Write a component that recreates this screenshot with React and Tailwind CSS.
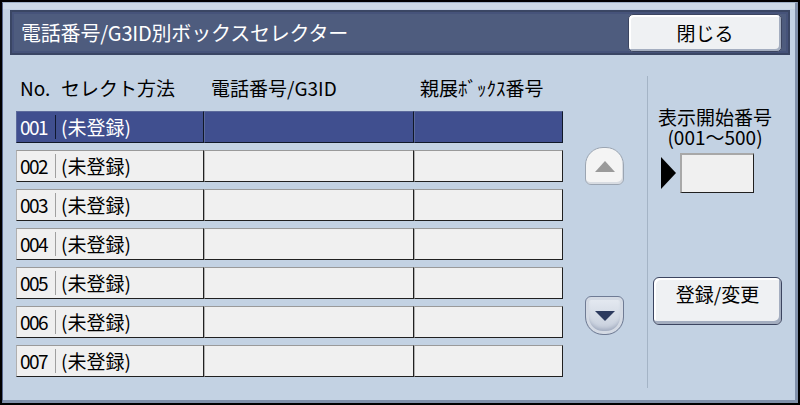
import React from 'react';

const rows = ['001', '002', '003', '004', '005', '006', '007'];

const Row = ({ no, selected }) => {
  const cell = selected
    ? 'bg-[#404f8f] border-t border-l border-t-[#5c6a9c] border-l-[#5c6a9c] border-r border-b border-r-[#101828] border-b-[#101828]'
    : 'bg-[#f0f0f0] border-t border-l border-t-[#9a9a9a] border-l-[#b0b0b0] border-r border-b border-r-[#202020] border-b-[#202020]';
  return (
    <div className="flex h-[32px]">
      <div className={`${cell} w-[188px] flex items-center pb-[2px] ${selected ? 'text-white' : 'text-black'}`}>
        <span className="w-[38px] pl-[3px] text-[19px] tracking-[-1.5px] leading-none">{no}</span>
        <span className={`w-px h-[24px] mt-[2px] ${selected ? 'bg-[#101830]' : 'bg-[#a0a0a0]'}`}></span>
        <span className="pl-[5px] text-[19px] leading-none">(未登録)</span>
      </div>
      <div className={`${cell} w-[210px]`}></div>
      <div className={`${cell} w-[149px]`}></div>
    </div>
  );
};

export default function App() {
  return (
    <div className="w-[800px] h-[405px] bg-black p-[2px] font-['Noto_Sans_CJK_JP',sans-serif]">
      <div className="w-full h-full flex flex-col bg-[#c3d2e3] border-t border-l border-t-[#9eb0c6] border-l-[#55658a] border-r-[3px] border-b-[3px] border-r-[#8090aa] border-b-[#8090aa] shadow-[inset_0_6px_0_#ccd9e6]">
        {/* title bar */}
        <div className="ml-[7px] mr-[5px] mt-[7px] h-[45px] flex items-center bg-[#4e5c7e] border-2 border-[#3a4664] shadow-[inset_0_0_0_2px_#46537a]">
          <span className="pl-[9px] text-white text-[20px] leading-none tracking-[-0.2px]">電話番号/G3ID別ボックスセレクター</span>
          <button className="ml-auto mr-[6px] w-[154px] h-[38px] rounded-[5px] bg-[#eff1f3] border border-[#3c4560] shadow-[inset_-2px_-2px_0_#a4aec0,inset_2px_2px_0_#ffffff] text-black text-[19px] leading-none flex items-center justify-center">
            閉じる
          </button>
        </div>

        {/* body */}
        <div className="flex pl-[13px]">
          <div className="w-[547px] flex flex-col">
            <div className="mt-[21px] h-[22px] flex items-center text-[19px] leading-none text-black">
              <span className="w-[45px] pl-[4px]">No.</span>
              <span className="w-[150px]">セレクト方法</span>
              <span className="w-[209px]">電話番号/G3ID</span>
              <span>親展ﾎﾞｯｸｽ番号</span>
            </div>
            <div className="mt-[13px] flex flex-col gap-[7px]">
              {rows.map((r, i) => (
                <Row key={r} no={r} selected={i === 0} />
              ))}
            </div>
          </div>

          {/* scroll buttons */}
          <div className="ml-[22px] w-[39px] flex flex-col">
            <div className="mt-[92px] h-[38px] rounded-t-[18px] rounded-b-[6px] bg-[#f4f4f4] border border-[#9ba5b2] shadow-[inset_-1px_-2px_0_#d8dce2] flex items-center justify-center">
              <svg width="20" height="11" viewBox="0 0 20 11">
                <polygon points="10,0 20,11 0,11" fill="#9a9a9a" />
              </svg>
            </div>
            <div className="mt-[111px] h-[39px] rounded-t-[6px] rounded-b-[18px] bg-gradient-to-b from-[#e6ebf2] to-[#c4ccda] border border-[#6f7b94] shadow-[inset_0_0_0_3px_#d4dae4,inset_0_-5px_4px_#9ea8bc] flex items-center justify-center">
              <svg width="20" height="10" viewBox="0 0 20 10">
                <polygon points="0,0 20,0 10,10" fill="#2c3a5e" />
              </svg>
            </div>
          </div>

          {/* divider */}
          <div className="ml-[23px] mt-[21px] w-px h-[312px] bg-[#a4b4c6]"></div>

          {/* right column */}
          <div className="w-[134px] flex flex-col">
            <div className="mt-[52px] text-center text-black text-[19px] leading-[20px]">
              <div>表示開始番号</div>
              <div>(001～500)</div>
            </div>
            <div className="mt-[6px] ml-[13px] flex items-center gap-[4px]">
              <svg width="15" height="32" viewBox="0 0 15 32">
                <polygon points="0,0 15,16 0,32" fill="#000000" />
              </svg>
              <div className="w-[74px] h-[40px] bg-[#f0f0f0] border-t-2 border-l-2 border-t-[#a8a8a8] border-l-[#a8a8a8] border-r border-b border-r-[#202020] border-b-[#202020]"></div>
            </div>
            <button className="mt-[84px] ml-[5px] w-[129px] h-[48px] rounded-[6px] bg-[#eff1f3] border border-[#3c4560] shadow-[inset_-2px_-3px_0_#a4aec0,inset_2px_2px_0_#ffffff] text-black text-[19px] leading-none flex justify-center pt-[6px]">
              登録/変更
            </button>
          </div>
        </div>
      </div>
    </div>
  );
}
